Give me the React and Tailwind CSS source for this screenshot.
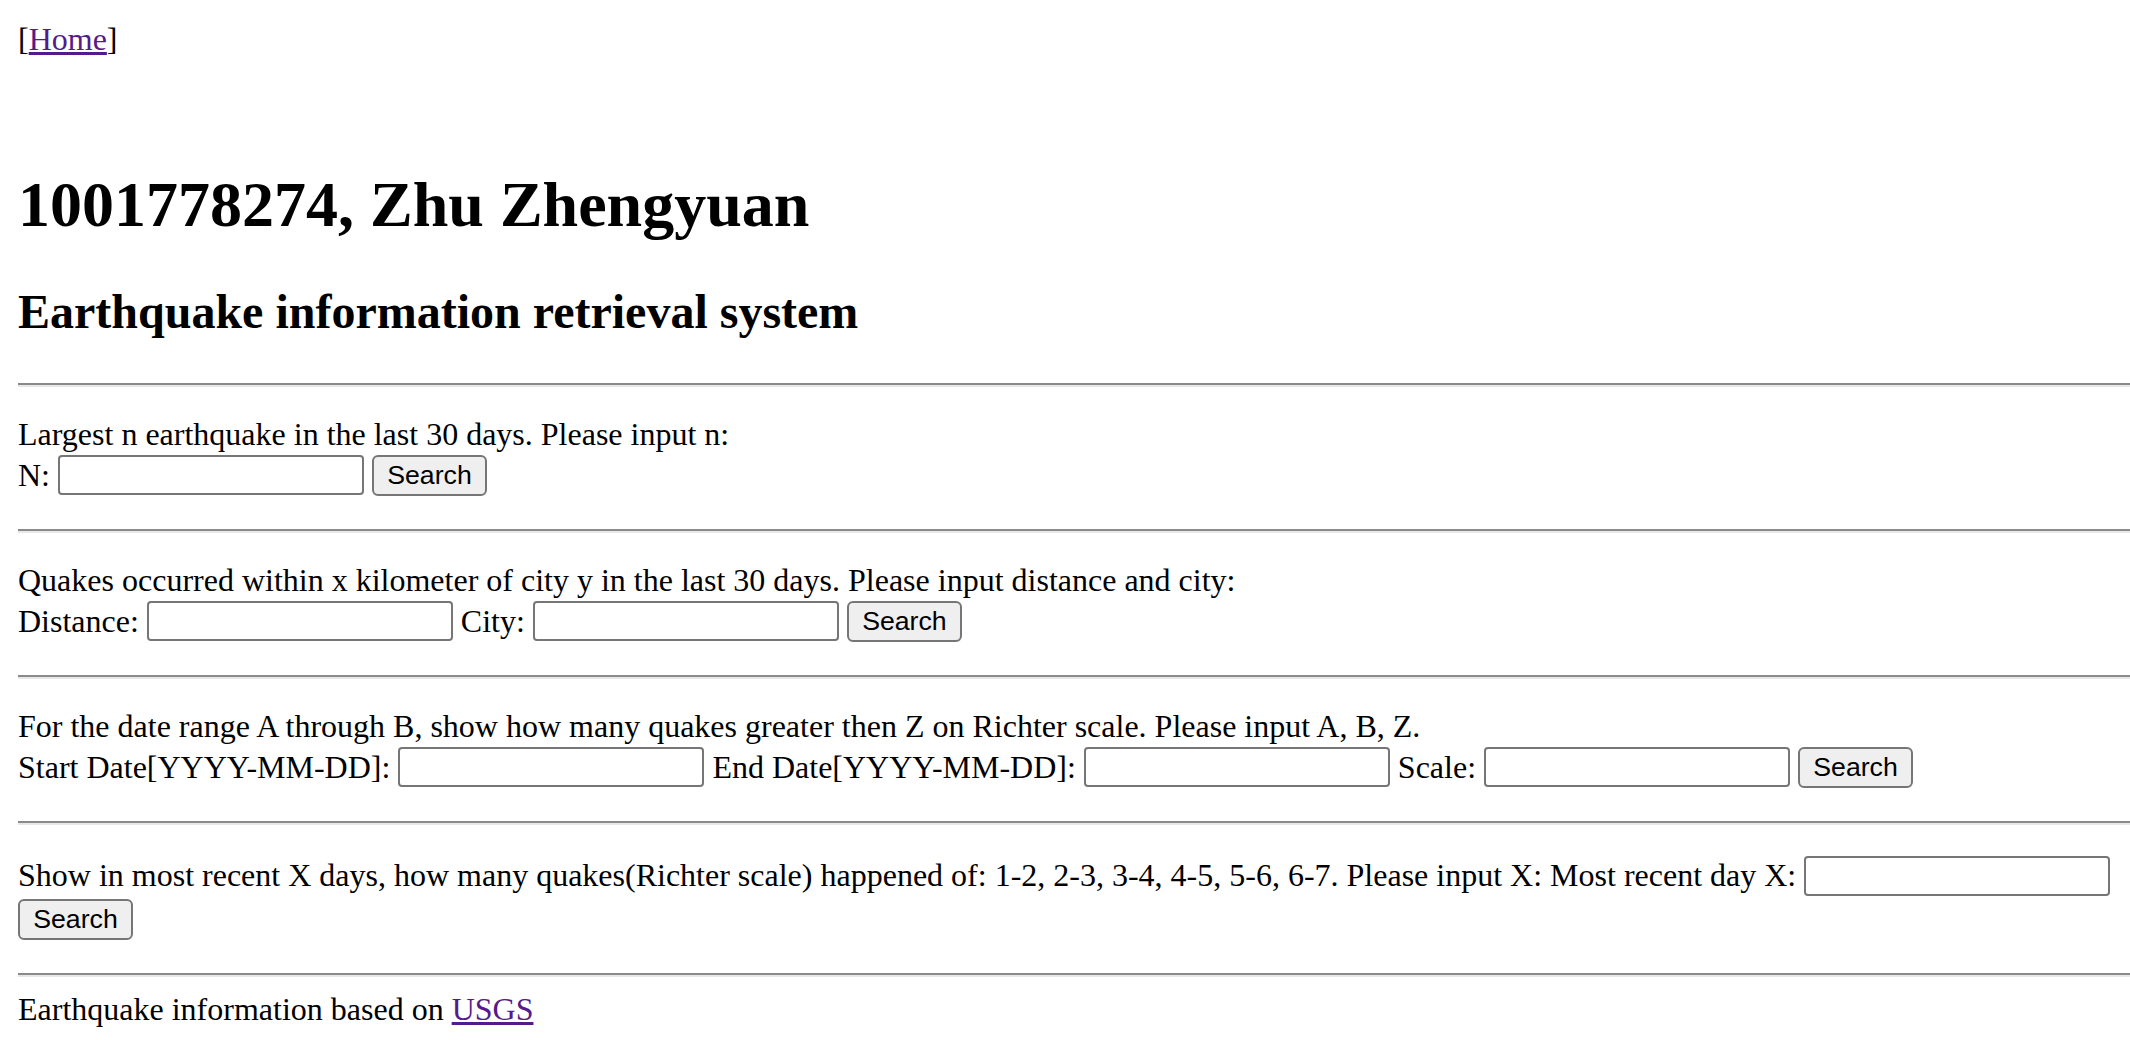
import React from "react";

const serif = { fontFamily: '"Liberation Serif", "Times New Roman", serif' };

function Input({ extra = "" }) {
  return (
    <input
      type="text"
      className={
        "h-[40px] w-[306px] shrink-0 rounded-[4px] border-2 border-solid border-[#767676] bg-white px-[4px] outline-none " +
        extra
      }
    />
  );
}

function SearchButton() {
  return (
    <button
      type="button"
      className="flex h-[41px] w-[115px] shrink-0 items-center justify-center rounded-[6px] border-2 border-solid border-[#767676] bg-[#efefef] text-[26.67px] leading-none text-black"
      style={{ fontFamily: '"Liberation Sans", Arial, sans-serif' }}
    >
      Search
    </button>
  );
}

function Rule() {
  return (
    <hr className="h-0 border-0 border-t-2 border-b-2 border-solid border-t-[#8a8a8a] border-b-[#e8e8e8]" />
  );
}

function Label({ children }) {
  return <span className="shrink-0 whitespace-pre leading-[40px]">{children}</span>;
}

export default function App() {
  return (
    <div
      className="min-h-screen bg-white pl-[18px] pt-[19px] text-[32px] text-black"
      style={serif}
    >
      <div className="leading-[40px]">
        [<a href="#" className="text-[#551a8b] underline">Home</a>]
      </div>

      <h1 className="mt-[110px] text-[64px] font-bold leading-[72px]">
        1001778274, Zhu Zhengyuan
      </h1>
      <h2 className="mt-[43px] text-[48px] font-bold leading-[56px]">
        Earthquake information retrieval system
      </h2>

      <div className="mt-[43px]">
        <Rule />
      </div>

      {/* Section 1 */}
      <div className="pt-[27px] pb-[33px]">
        <div className="leading-[40px]">
          Largest n earthquake in the last 30 days. Please input n:
        </div>
        <div className="mt-[1px] flex h-[41px] items-start gap-[8px]">
          <Label>N:</Label>
          <Input />
          <SearchButton />
        </div>
      </div>

      <Rule />

      {/* Section 2 */}
      <div className="pt-[27px] pb-[33px]">
        <div className="leading-[40px]">
          Quakes occurred within x kilometer of city y in the last 30 days. Please input distance and city:
        </div>
        <div className="mt-[1px] flex h-[41px] items-start gap-[8px]">
          <Label>Distance:</Label>
          <Input />
          <Label>City:</Label>
          <Input />
          <SearchButton />
        </div>
      </div>

      <Rule />

      {/* Section 3 */}
      <div className="pt-[27px] pb-[33px]">
        <div className="leading-[40px]">
          For the date range A through B, show how many quakes greater then Z on Richter scale. Please input A, B, Z.
        </div>
        <div className="mt-[1px] flex h-[41px] items-start gap-[8px]">
          <Label>Start Date[YYYY-MM-DD]:</Label>
          <Input />
          <Label>End Date[YYYY-MM-DD]:</Label>
          <Input />
          <Label>Scale:</Label>
          <Input />
          <SearchButton />
        </div>
      </div>

      <Rule />

      {/* Section 4 */}
      <div className="pt-[27px] pb-[33px]">
        <div className="flex h-[47px] items-start gap-[8px] pt-[3px]">
          <Label>
            Show in most recent X days, how many quakes(Richter scale) happened of: 1-2, 2-3, 3-4, 4-5, 5-6, 6-7. Please input X: Most recent day X:
          </Label>
          <Input extra="mt-[1px]" />
        </div>
        <div className="flex h-[41px] items-start">
          <SearchButton />
        </div>
      </div>

      <Rule />

      <div className="mt-[12px] leading-[40px]">
        Earthquake information based on{" "}
        <a href="#" className="text-[#551a8b] underline">USGS</a>
      </div>
    </div>
  );
}
